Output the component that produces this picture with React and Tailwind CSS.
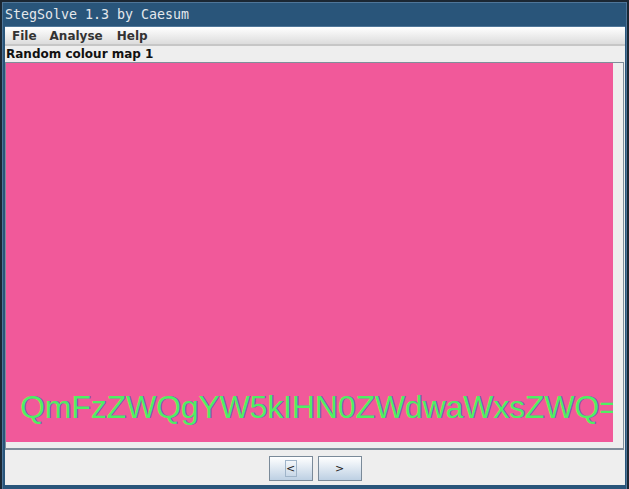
import React from "react";

export default function App() {
  const sans = { fontFamily: '"DejaVu Sans", sans-serif' };
  return (
    <div className="w-[629px] h-[489px] bg-[#1b2733] pt-[2px] pl-[2px] pr-[2px] flex overflow-hidden">
      <div className="flex-1 flex flex-col bg-[#29557a] border-t border-l border-r border-[#4f7699]">
        {/* title bar */}
        <div
          className="h-[23px] flex items-center pl-[2px] text-[13.3px] text-[#e4e8ec] leading-none"
          style={{ fontFamily: '"DejaVu Sans Mono", monospace' }}
        >
          StegSolve 1.3 by Caesum
        </div>
        {/* body */}
        <div className="flex-1 flex flex-col ml-[2px] mr-px mb-[4px] bg-[#eeeeee] border-t border-[#4f7699]">
          {/* menu bar */}
          <div
            className="h-[19px] flex items-center pl-px bg-gradient-to-b from-[#ffffff] to-[#dcdcdc] border-b-2 border-[#c6c6c6] text-[12px] font-bold text-[#333333]"
            style={sans}
          >
            <span className="px-[6px]">File</span>
            <span className="px-[7px]">Analyse</span>
            <span className="px-[7px]">Help</span>
          </div>
          {/* label */}
          <div className="h-[16px] flex items-center pl-px text-[12px] font-bold text-[#111111] leading-none" style={sans}>
            Random colour map 1
          </div>
          {/* image panel */}
          <div className="h-[388px] mr-px border border-[#7f8d9a] border-b-2 bg-[#eeeeee] flex">
            <div className="w-[607px] h-[379px] bg-[#f1599a] flex flex-col justify-end overflow-hidden pl-[14px] pb-[19px]">
              <div
                className="text-[32px] leading-[32px] whitespace-nowrap text-[#50ee62] tracking-[-0.15px] [text-shadow:1px_0_0_rgba(70,60,210,0.55)]"
                style={{ fontFamily: '"Liberation Sans", Arial, sans-serif' }}
              >
                QmFzZWQgYW5kIHN0ZWdwaWxsZWQ=
              </div>
            </div>
          </div>
          {/* buttons */}
          <div className="flex-1 flex items-center justify-center gap-[5px] pt-px">
            <button className="w-[44px] h-[25px] border border-[#7a8a99] bg-gradient-to-b from-[#ffffff] to-[#bdd0e3] flex items-center justify-center">
              <span
                className="w-[12px] h-[17px] border border-[#9fb4c9] flex items-center justify-center text-[11px] text-[#222222] leading-none"
                style={sans}
              >
                &lt;
              </span>
            </button>
            <button className="w-[44px] h-[25px] border border-[#7a8a99] bg-gradient-to-b from-[#ffffff] to-[#bdd0e3] flex items-center justify-center">
              <span className="text-[11px] text-[#222222] leading-none" style={sans}>
                &gt;
              </span>
            </button>
          </div>
        </div>
      </div>
    </div>
  );
}
